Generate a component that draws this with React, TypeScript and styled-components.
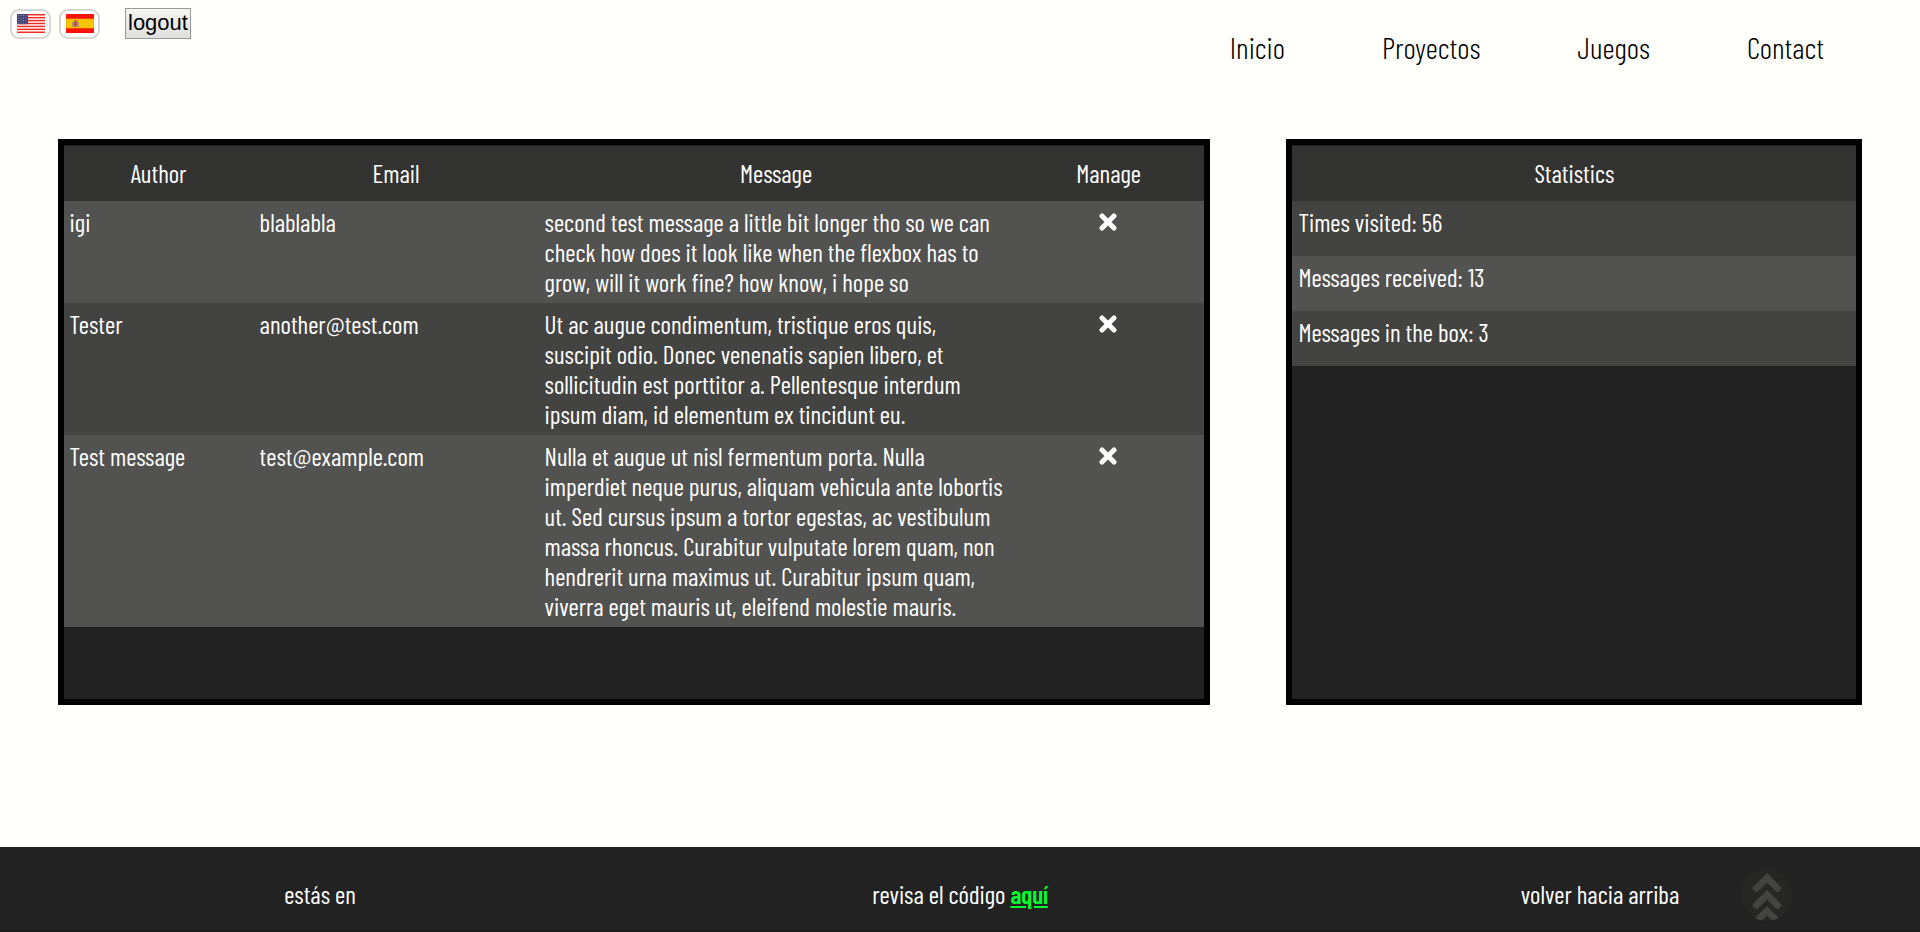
import React from "react";
import styled, { createGlobalStyle } from "styled-components";

const GlobalStyle = createGlobalStyle`
  *, *::before, *::after { box-sizing: border-box; }
  body {
    margin: 0;
    background: #fffffc;
    color: #000;
    font-family: "Barlow Condensed", "Roboto Condensed", sans-serif;
    font-size: 25px;
    line-height: 30px;
  }
`;

const Page = styled.div`
  min-height: 100vh;
  display: flex;
  flex-direction: column;
`;

const TopBar = styled.header`
  display: flex;
  justify-content: space-between;
  align-items: flex-start;
  padding: 8px 5% 0 10px;
  min-height: 139px;
`;

const Session = styled.div`
  display: flex;
  align-items: center;
  gap: 8px;
`;

const FlagButton = styled.button`
  display: flex;
  align-items: center;
  justify-content: center;
  width: 41px;
  height: 30px;
  padding: 0;
  border: 2px solid #d6d6d4;
  border-radius: 9px;
  background: #fff;
  cursor: pointer;
`;

const LogoutButton = styled.button`
  height: 31px;
  margin-left: 17px;
  padding: 0 2px 2px;
  border: 1px solid #999;
  background: linear-gradient(#f4f4f3, #dfdfde);
  color: #000;
  font: 22px/26px "Liberation Sans", Arial, sans-serif;
  cursor: pointer;
`;

const Nav = styled.nav`
  display: flex;
  gap: 97px;
  padding-top: 21px;
`;

const NavLink = styled.a`
  color: #000;
  font-size: 30px;
  line-height: 36px;
  font-weight: 300;
  text-decoration: none;
`;

const Main = styled.main`
  flex: 1;
  display: grid;
  grid-template-columns: 2fr 1fr;
  column-gap: 4vw;
  padding: 0 3% 142px;
`;

const Panel = styled.section`
  border: 6px solid #000;
  background: #222;
  color: #fff;
`;

const MessageTable = styled.table`
  display: block;
  width: 100%;

  thead, tbody { display: block; }
`;

const HeadRow = styled.tr`
  display: grid;
  grid-template-columns: 2fr 3fr 5fr 2fr;
  background: #333331;
  border-top: 1px solid #222;
`;

const HeadCell = styled.th`
  padding: 12px 6px 13px;
  font-weight: 400;
  text-align: center;
`;

const Row = styled.tr`
  display: grid;
  grid-template-columns: 2fr 3fr 5fr 2fr;
  background: #434341;

  &:nth-child(odd) { background: #525250; }
`;

const Cell = styled.td<{ $center?: boolean }>`
  padding: 6px 7px 6px 6px;
  text-align: ${(p) => (p.$center ? "center" : "left")};
`;

const DeleteButton = styled.button`
  display: inline-flex;
  align-items: center;
  justify-content: center;
  width: 30px;
  height: 30px;
  padding: 0;
  border: 0;
  background: none;
  color: #fff;
  vertical-align: top;
  cursor: pointer;
`;

const StatTitle = styled.h2`
  margin: 0;
  padding: 12px 6px 13px;
  border-top: 1px solid #222;
  background: #333331;
  font-size: 25px;
  line-height: 30px;
  font-weight: 400;
  text-align: center;
`;

const StatList = styled.ul`
  margin: 0;
  padding: 0;
  list-style: none;
`;

const Stat = styled.li`
  min-height: 55px;
  padding: 6px;
  background: #434341;

  &:nth-child(even) { background: #525250; }
`;

const Footer = styled.footer`
  display: grid;
  grid-template-columns: repeat(3, 1fr);
  align-items: center;
  height: 85px;
  padding-top: 11px;
  border-bottom: 2px solid #1f1b1c;
  background: #222;
  color: #fff;
  text-align: center;
`;

const CodeLink = styled.a`
  color: #00ff2f;
  font-weight: 600;
  text-decoration: underline;
`;

const ToTop = styled.button`
  position: fixed;
  right: 127px;
  bottom: 11px;
  width: 52px;
  height: 52px;
  padding: 0;
  border: 0;
  border-radius: 50%;
  overflow: hidden;
  background: #262624;
  cursor: pointer;

  svg { display: block; }
`;

const links = ["Inicio", "Proyectos", "Juegos", "Contact"];

const messages = [
  {
    author: "igi",
    email: "blablabla",
    text: "second test message a little bit longer tho so we can check how does it look like when the flexbox has to grow, will it work fine? how know, i hope so",
  },
  {
    author: "Tester",
    email: "another@test.com",
    text: "Ut ac augue condimentum, tristique eros quis, suscipit odio. Donec venenatis sapien libero, et sollicitudin est porttitor a. Pellentesque interdum ipsum diam, id elementum ex tincidunt eu.",
  },
  {
    author: "Test message",
    email: "test@example.com",
    text: "Nulla et augue ut nisl fermentum porta. Nulla imperdiet neque purus, aliquam vehicula ante lobortis ut. Sed cursus ipsum a tortor egestas, ac vestibulum massa rhoncus. Curabitur vulputate lorem quam, non hendrerit urna maximus ut. Curabitur ipsum quam, viverra eget mauris ut, eleifend molestie mauris.",
  },
];

const stats = [
  { label: "Times visited", value: 56 },
  { label: "Messages received", value: 13 },
  { label: "Messages in the box", value: 3 },
];

const UsFlag = () => (
  <svg width="28" height="19" viewBox="0 0 28 19" aria-hidden="true">
    <rect width="28" height="19" fill="#fff" />
    {[0, 1, 2, 3, 4, 5, 6].map((i) => (
      <rect key={i} y={i * 2.92} width="28" height="1.46" fill="#f5281e" />
    ))}
    <rect width="11" height="10.2" fill="#46437a" />
    {[1.5, 4, 6.5, 9].map((y) =>
      [1.5, 4, 6.5, 9].map((x) => (
        <circle key={`${x}-${y}`} cx={x} cy={y} r="0.5" fill="#a3a1c0" />
      ))
    )}
  </svg>
);

const SpainFlag = () => (
  <svg width="28" height="19" viewBox="0 0 28 19" aria-hidden="true">
    <rect width="28" height="19" fill="#fb1307" />
    <rect y="4.75" width="28" height="9.5" fill="#f8c300" />
    <path d="M7.5 7.5h4v3.5a2 2 0 0 1-4 0z" fill="#b5603c" />
    <path d="M8 6.3h3v1.2H8z" fill="#a4552f" />
    <path d="M6 8h1v5H6zM12 8h1v5h-1z" fill="#b08a63" />
    <circle cx="9.5" cy="10" r="0.9" fill="#5b5a7c" />
  </svg>
);

const CrossIcon = () => (
  <svg width="18" height="18" viewBox="0 0 18 18" aria-hidden="true">
    <path d="M3 3L15 15M15 3L3 15" stroke="currentColor" strokeWidth="5" strokeLinecap="round" />
  </svg>
);

const ChevronsIcon = () => (
  <svg width="52" height="52" viewBox="0 0 52 52" aria-hidden="true">
    {[4, 21, 37].map((y) => (
      <path
        key={y}
        transform={`translate(0 ${y})`}
        d="M26 0L40 14Q41 15 40 16.500L38 18.500Q36.500 19.500 35 18.500L26 9.500L17 18.500Q15.500 19.500 14 18.500L12 16.500Q11 15 12 14Z"
        fill="#434341"
      />
    ))}
  </svg>
);

export default function App() {
  return (
    <Page>
      <GlobalStyle />
      <TopBar>
        <Session>
          <FlagButton type="button" aria-label="English"><UsFlag /></FlagButton>
          <FlagButton type="button" aria-label="Español"><SpainFlag /></FlagButton>
          <LogoutButton type="button">logout</LogoutButton>
        </Session>
        <Nav>
          {links.map((label) => (
            <NavLink key={label} href={`#${label.toLowerCase()}`}>{label}</NavLink>
          ))}
        </Nav>
      </TopBar>

      <Main>
        <Panel>
          <MessageTable>
            <thead>
              <HeadRow>
                <HeadCell scope="col">Author</HeadCell>
                <HeadCell scope="col">Email</HeadCell>
                <HeadCell scope="col">Message</HeadCell>
                <HeadCell scope="col">Manage</HeadCell>
              </HeadRow>
            </thead>
            <tbody>
              {messages.map((m) => (
                <Row key={m.email}>
                  <Cell>{m.author}</Cell>
                  <Cell>{m.email}</Cell>
                  <Cell>{m.text}</Cell>
                  <Cell $center>
                    <DeleteButton type="button" aria-label={`Delete message from ${m.author}`}>
                      <CrossIcon />
                    </DeleteButton>
                  </Cell>
                </Row>
              ))}
            </tbody>
          </MessageTable>
        </Panel>

        <Panel>
          <StatTitle>Statistics</StatTitle>
          <StatList>
            {stats.map((s) => (
              <Stat key={s.label}>{s.label}: {s.value}</Stat>
            ))}
          </StatList>
        </Panel>
      </Main>

      <Footer>
        <span>estás en</span>
        <span>revisa el código <CodeLink href="#codigo">aquí</CodeLink></span>
        <span>volver hacia arriba</span>
      </Footer>
      <ToTop type="button" aria-label="volver hacia arriba"><ChevronsIcon /></ToTop>
    </Page>
  );
}
